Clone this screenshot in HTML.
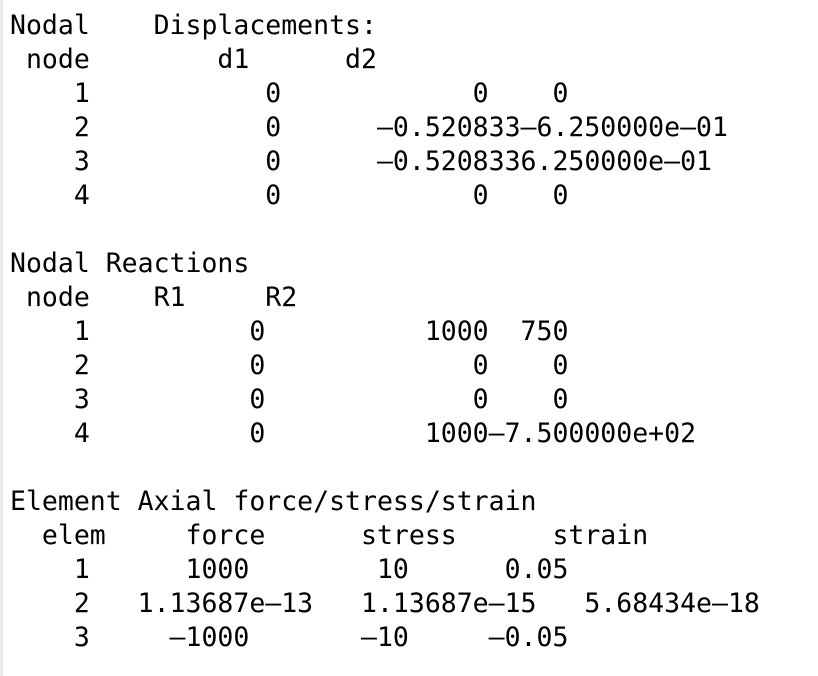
<!DOCTYPE html>
<html><head><meta charset="utf-8"><style>
html,body{margin:0;padding:0;background:#fff;width:818px;height:676px;overflow:hidden}
body{border-left:3px solid #ececec;box-sizing:border-box}
pre{margin:0;padding:9px 0 0 7px;font-family:"DejaVu Sans Mono","Liberation Mono",monospace;font-size:26.5px;line-height:34px;color:#000}
</style></head><body><pre>Nodal    Displacements:
 node        d1      d2
    1           0            0    0
    2           0      –0.520833–6.250000e–01
    3           0      –0.5208336.250000e–01
    4           0            0    0

Nodal Reactions
 node    R1     R2
    1          0          1000  750
    2          0             0    0
    3          0             0    0
    4          0          1000–7.500000e+02

Element Axial force/stress/strain
  elem     force      stress      strain
    1      1000        10      0.05
    2   1.13687e–13   1.13687e–15   5.68434e–18
    3     –1000       –10     –0.05
</pre></body></html>
